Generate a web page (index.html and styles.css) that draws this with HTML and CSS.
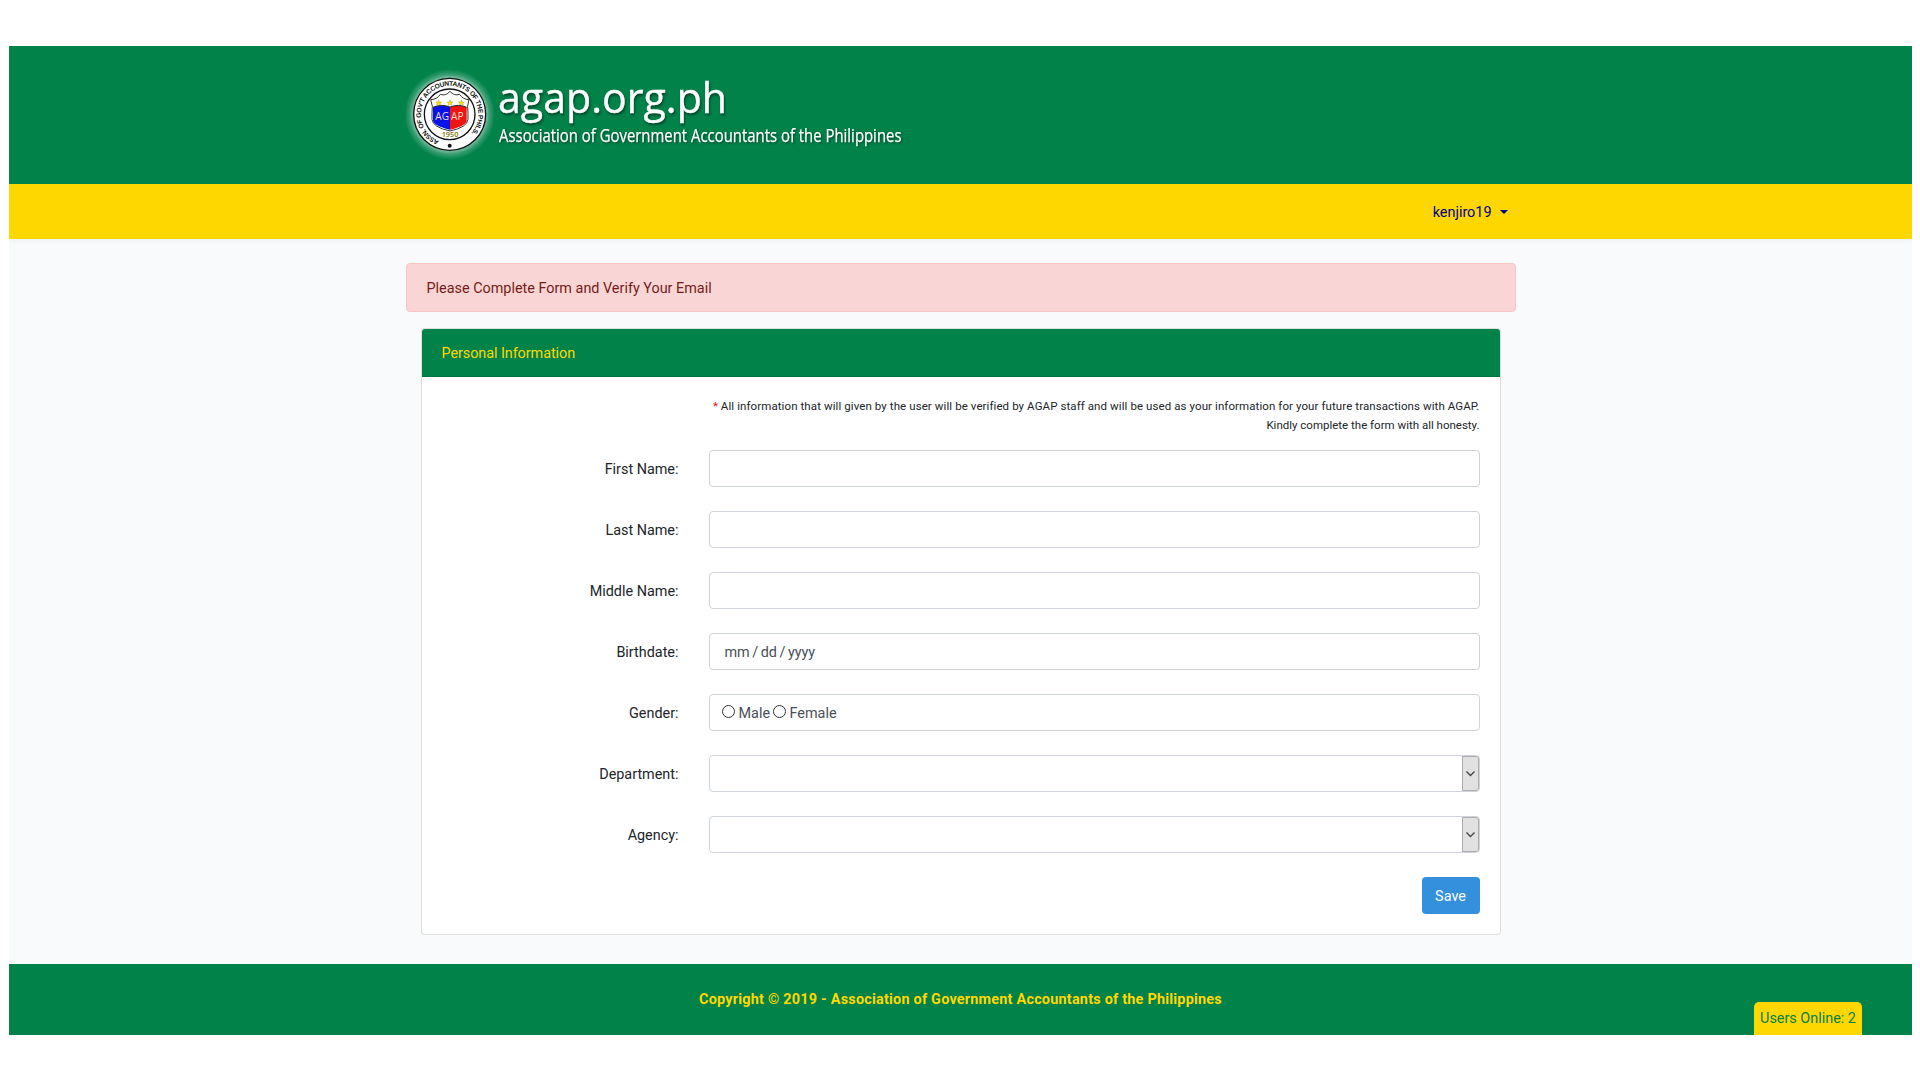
FILE: index.html
```
<!DOCTYPE html>
<html lang="en">
<head>
<meta charset="utf-8">
<title>AGAP</title>
<link rel="stylesheet" href="styles.css">
</head>
<body>
<header class="banner">
  <div class="container">
    <svg class="brand" width="520" height="138" viewBox="406 46 520 138" role="img" aria-label="agap.org.ph">
      <defs>
        <radialGradient id="glow">
          <stop offset="0.78" stop-color="#fff" stop-opacity="0.55"/>
          <stop offset="0.88" stop-color="#fff" stop-opacity="0.22"/>
          <stop offset="1" stop-color="#fff" stop-opacity="0"/>
        </radialGradient>
        <path id="ring" d="M117 243 A86 86 0 1 1 181 243"/>
      </defs>
      <g transform="translate(400 60) scale(.33333)">
        <circle cx="149" cy="163" r="136" fill="url(#glow)"/>
        <circle cx="149" cy="163" r="108" fill="#fff" stroke="#111" stroke-width="4"/>
        <circle cx="149" cy="163" r="76" fill="#fff" stroke="#111" stroke-width="4"/>
        <text class="seal-ring"><textPath href="#ring">ASSN. OF GOV'T ACCOUNTANTS OF THE PHILS.</textPath></text>
        <circle cx="149" cy="257" r="6" fill="#111"/>
        <path d="M92 119Q112 118 121 103Q138 109 150 94Q162 109 179 103Q188 118 207 119Q200 138 204 160V178Q202 202 150 213Q98 202 96 178V160Q100 138 92 119Z" fill="#fff" stroke="#333" stroke-width="3"/>
        <path d="M99 142Q125 131 150 141V209Q98 197 99 180Z" fill="#0b12e8"/>
        <path d="M150 141Q175 131 200 142V180Q202 197 150 209Z" fill="#f01414"/>
        <path d="M99 142Q125 131 150 141Q175 131 200 142" fill="none" stroke="#222" stroke-width="3"/>
        <g fill="#ffe600" stroke="#8a7a00" stroke-width="1">
          <path id="star" d="M116 120l2 6h7l-5 4 2 6-6-4-6 4 2-6-5-4h7z"/>
          <use href="#star" x="34"/>
          <use href="#star" x="68"/>
        </g>
        <text class="seal-letters" x="106" y="179" textLength="41" lengthAdjust="spacingAndGlyphs">AG</text>
        <text class="seal-letters" x="153" y="179" textLength="38" lengthAdjust="spacingAndGlyphs">AP</text>
        <text class="seal-year" x="125" y="230" textLength="50" lengthAdjust="spacingAndGlyphs">1950</text>
      </g>
      <text class="brand-name" x="498" y="112.500" textLength="229" lengthAdjust="spacingAndGlyphs">agap.org.ph</text>
      <text class="brand-sub" x="499" y="142" textLength="402.500" lengthAdjust="spacingAndGlyphs">Association of Government Accountants of the Philippines</text>
    </svg>
  </div>
</header>
<nav class="navbar">
  <div class="container nav-inner">
    <a class="user"><span class="user-name">kenjiro19</span><i class="caret"></i></a>
  </div>
</nav>
<main class="content">
  <div class="container">
    <div class="alert">Please Complete Form and Verify Your Email</div>
    <section class="card">
      <div class="card-header">Personal Information</div>
      <form class="card-body">
        <div class="note"><span class="note-main"><b class="star">*</b> All information that will given by the user will be verified by AGAP staff and will be used as your information for your future transactions with AGAP.</span><br>Kindly complete the form with all honesty.</div>
        <div class="row"><label>First Name:</label><input class="field" type="text"></div>
        <div class="row"><label>Last Name:</label><input class="field" type="text"></div>
        <div class="row"><label>Middle Name:</label><input class="field" type="text"></div>
        <div class="row"><label>Birthdate:</label><div class="field date"><span>mm</span><span>/</span><span>dd</span><span>/</span><span>yyyy</span></div></div>
        <div class="row"><label>Gender:</label><div class="field radios"><i class="radio"></i><span class="male">Male</span><i class="radio"></i><span>Female</span></div></div>
        <div class="row"><label>Department:</label><div class="field select"><span class="drop"><svg width="9" height="6" viewBox="0 0 9 6"><path d="M.5.5l4 4 4-4"/></svg></span></div></div>
        <div class="row"><label>Agency:</label><div class="field select"><span class="drop"><svg width="9" height="6" viewBox="0 0 9 6"><path d="M.5.5l4 4 4-4"/></svg></span></div></div>
        <div class="actions"><button class="save" type="button">Save</button></div>
      </form>
    </section>
  </div>
</main>
<footer class="footer">
  <span class="copyright">Copyright © 2019 - Association of Government Accountants of the Philippines</span>
  <div class="online">Users Online: 2</div>
</footer>
</body>
</html>
```
FILE: styles.css
```
* { box-sizing: border-box; }
body {
  margin: 46px 8px 45px 9px;
  background: #fff;
  color: #212529;
  font: 14.4px/23px Roboto, "Noto Sans", sans-serif;
}
.container { width: 1110px; margin: 0 auto; }
.banner { height: 138px; background: #008249; }
.brand { display: block; }
.brand text { font-family: "Open Sans", sans-serif; }
.brand-name { font-size: 42px; fill: #fff; stroke: #fff; stroke-width: .4px; filter: drop-shadow(1px 2px 1px rgba(0,0,0,.45)); }
.brand-sub { font-size: 18px; font-weight: 500; fill: #fff; stroke: #fff; stroke-width: .25px; filter: drop-shadow(1px 1px 1px rgba(0,0,0,.45)); }
.brand .seal-ring { font: 700 20px "Liberation Sans", sans-serif; letter-spacing: -.9px; fill: #111; }
.brand .seal-letters { font: 30px "Open Sans", sans-serif; fill: #e8d9c0; }
.brand .seal-year { font: 600 21px "Open Sans", sans-serif; fill: #7d7500; }
.navbar {
  position: relative;
  height: 55px;
  background: #ffd700;
  box-shadow: 0 2px 4px rgba(0,0,0,.04);
}
.nav-inner { display: flex; justify-content: flex-end; align-items: center; height: 55px; }
.user { display: flex; align-items: center; gap: 8px; padding-right: 8px; color: #00008b; }
.user-name { padding-top: 2px; }
.caret { border: 4px solid transparent; border-top-color: #00008b; border-bottom: 0; }
.content { height: 725px; padding-top: 24px; background: #f8fafc; }
.alert {
  height: 49px;
  padding: 13px 20px 11px;
  margin-bottom: 16px;
  border: 1px solid #f7c6c5;
  border-radius: 4px;
  background: #f9d6d5;
  color: #761b18;
}
.card {
  height: 607px;
  margin: 0 15px;
  border: 1px solid rgba(0,0,0,.125);
  border-radius: 4px;
  background: #fff;
  overflow: hidden;
}
.card-header {
  height: 48px;
  padding: 13px 20px 11px;
  border-bottom: 1px solid rgba(0,0,0,.125);
  background: #008249;
  color: #ffd700;
  letter-spacing: -.06px;
}
.card-body { padding: 20px; }
.note { height: 53px; font-size: 11.5px; line-height: 19px; text-align: right; white-space: nowrap; }
.note-main { letter-spacing: .09px; }
.star { color: red; font-weight: 400; }
.row { display: grid; grid-template-columns: 237px 771px; column-gap: 30px; height: 37px; margin-bottom: 24px; }
label { padding-top: 8px; text-align: right; }
.field {
  display: flex;
  align-items: center;
  width: 771px;
  height: 37px;
  padding: 0 15px;
  border: 1px solid #ced4da;
  border-radius: 4px;
  background: #fff;
  color: #495057;
  font: inherit;
}
.date { gap: 2.5px; padding-top: 2px; }
.radios { padding: 2px 0 0 12px; }
.radio { width: 13px; height: 13px; margin: -4px 4px 0 0; border: 1px solid #333; border-radius: 50%; }
.male { margin-right: 2.500px; }
.select { justify-content: flex-end; padding: 0; }
.drop {
  display: flex;
  align-items: center;
  justify-content: center;
  width: 17px;
  height: 35px;
  border: 1px solid #adadad;
  border-radius: 0 3px 3px 0;
  background: #e1e1e1;
}
.drop path { fill: none; stroke: #444; stroke-width: 1.3; }
.actions { display: flex; justify-content: flex-end; }
.save { width: 58px; height: 37px; padding: 1px 0 0; border: 0; border-radius: 4px; background: #3490dc; color: #fff; font: inherit; }
.footer { position: relative; height: 71px; padding-top: 24px; background: #008249; color: #ffd700; text-align: center; }
.copyright { font-weight: 700; letter-spacing: .23px; }
.online {
  position: absolute;
  right: 50px;
  bottom: 0;
  width: 108px;
  height: 33px;
  padding-top: 5px;
  border-radius: 5px 5px 0 0;
  background: #ffd700;
  color: #008249;
}
```
